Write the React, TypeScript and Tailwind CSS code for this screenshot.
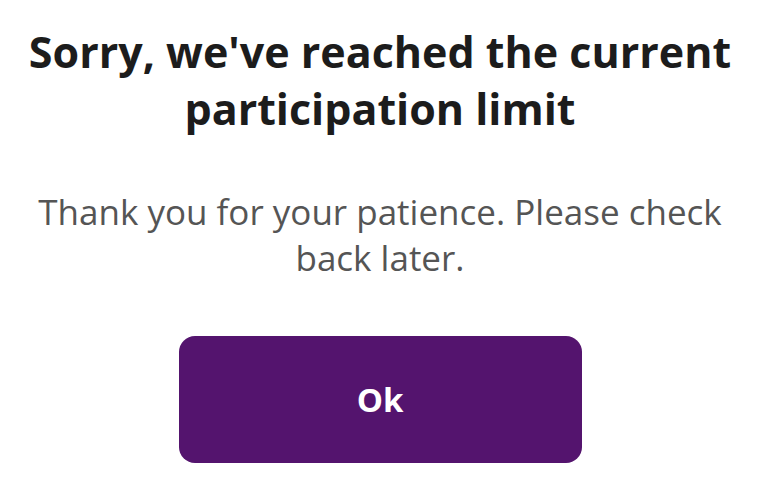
export default function App() {
  return (
    <div
      className="min-h-screen w-[760px] bg-white flex flex-col items-center pt-[23px]"
      style={{ fontFamily: '"Open Sans", "Noto Sans", sans-serif' }}
    >
      <h1 className="text-center text-[43px] leading-[57px] font-bold text-[#1c1c1c] whitespace-nowrap">
        Sorry, we've reached the current
        <br />
        participation limit
      </h1>
      <p className="mt-[52px] text-center text-[35px] leading-[46px] text-[#555555] whitespace-nowrap">
        Thank you for your patience. Please check
        <br />
        back later.
      </p>
      <button className="mt-[55px] w-[403px] h-[127px] rounded-[16px] bg-[#54146e] text-white text-[33px] font-bold">
        Ok
      </button>
    </div>
  );
}
